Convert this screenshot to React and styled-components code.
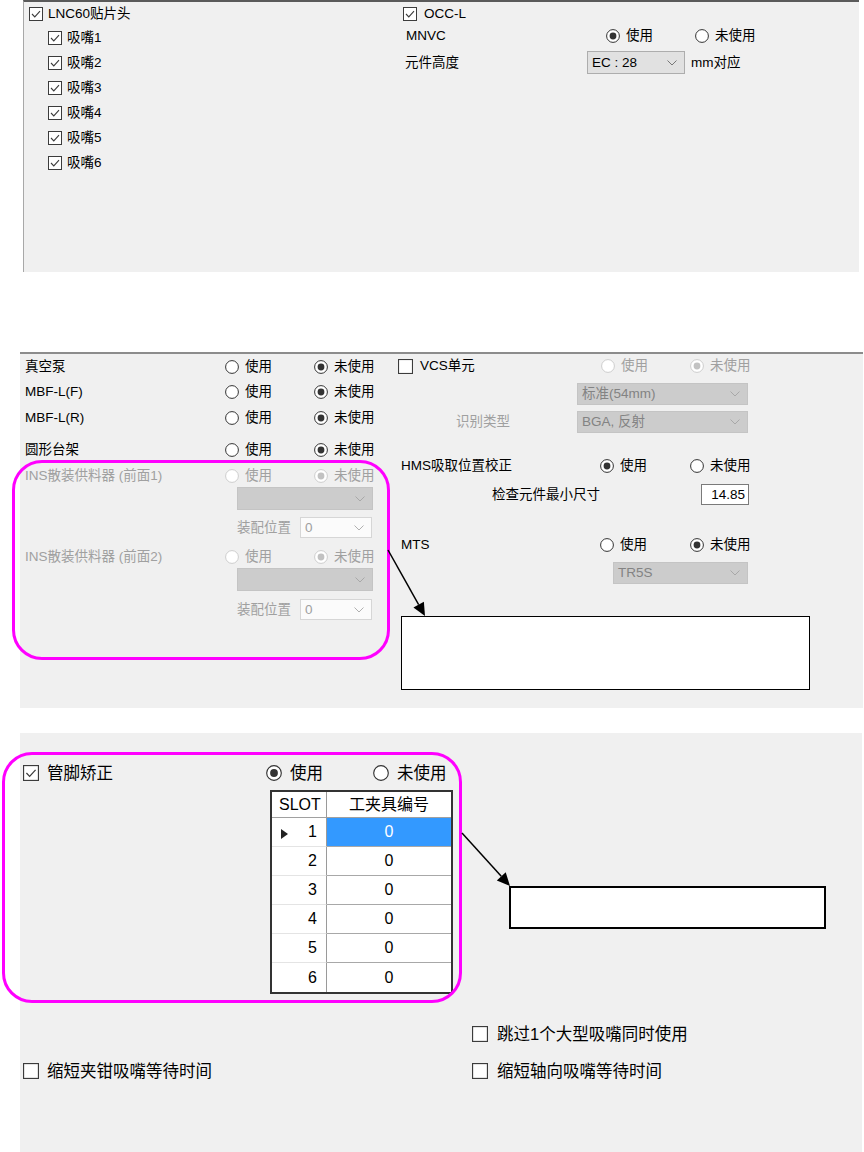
import React from 'react'
import styled, { createGlobalStyle } from 'styled-components'

const GlobalStyle = createGlobalStyle`
  body {
    margin: 0;
    background: #fff;
    font-family: "Liberation Sans", "Noto Sans CJK SC", sans-serif;
    color: #000;
  }
  * { box-sizing: border-box; }
`

const Page = styled.div`
  width: 864px;
  height: 1152px;
  overflow: hidden;
  display: flex;
  flex-direction: column;
`

const Panel = styled.section`
  position: relative;
  flex: ${p => p.$grow ? '1' : 'none'};
  background: #f0f0f0;
  margin-left: ${p => p.$left}px;
  margin-top: ${p => p.$top || 0}px;
  width: ${p => p.$width}px;
  height: ${p => p.$height ? p.$height + 'px' : 'auto'};
  border-top: ${p => p.$borderTop || 'none'};
  border-left: ${p => p.$borderLeft || 'none'};
  font-size: ${p => p.$font}px;
`

const Columns = styled.div`
  display: grid;
  grid-template-columns: ${p => p.$cols};
  padding-left: ${p => p.$pad || 0}px;
`

const Column = styled.div`
  display: flex;
  flex-direction: column;
`

const Row = styled.div`
  display: flex;
  align-items: center;
  height: ${p => p.$h || 22}px;
  margin-top: ${p => p.$mt || 0}px;
  padding-left: ${p => p.$indent || 0}px;
  white-space: nowrap;
`

const Cell = styled.div`
  flex: none;
  width: ${p => p.$w ? p.$w + 'px' : 'auto'};
  padding-left: ${p => p.$pad || 0}px;
  display: flex;
  align-items: center;
  gap: ${p => p.$gap || 0}px;
`

const Text = styled.span`
  color: ${p => p.$muted ? '#a0a0a0' : '#000'};
  line-height: 1;
`

const Option = styled.span`
  display: inline-flex;
  align-items: center;
  gap: ${p => p.$gap || 6}px;
`

const Svg = styled.svg`
  flex: none;
  display: block;
`

const CheckBox = ({ checked, size = 14 }) => (
  <Svg width={size} height={size} viewBox="0 0 14 14">
    <rect x="0.5" y="0.5" width="13" height="13" fill="#fff" stroke="#3c3c3c" />
    {checked && <path d="M3 7 L5.8 9.9 L11 4.2" fill="none" stroke="#3c3c3c" strokeWidth="1.1" />}
  </Svg>
)

const Radio = ({ checked, disabled, size = 14 }) => (
  <Svg width={size} height={size} viewBox="0 0 14 14">
    <circle cx="7" cy="7" r="6.4" fill="#fff" stroke={disabled ? '#cdcdcd' : '#333'} strokeWidth="1" />
    {checked && <circle cx="7" cy="7" r="3.4" fill={disabled ? '#c2c2c2' : '#333'} />}
  </Svg>
)

const CheckOption = ({ checked, label, size, gap, muted }) => (
  <Option $gap={gap}>
    <CheckBox checked={checked} size={size} />
    <Text $muted={muted}>{label}</Text>
  </Option>
)

const RadioOption = ({ checked, disabled, label, size, gap }) => (
  <Option $gap={gap}>
    <Radio checked={checked} disabled={disabled} size={size} />
    <Text $muted={disabled}>{label}</Text>
  </Option>
)

const SELECT = {
  normal: { bg: '#e1e1e1', border: '#adadad', color: '#000', arrow: '#777' },
  disabled: { bg: '#cccccc', border: '#c4c4c4', color: '#838383', arrow: '#a8a8a8' },
  field: { bg: '#fbfbfb', border: '#d6d6d6', color: '#a0a0a0', arrow: '#b0b0b0' },
}

const SelectBox = styled.div`
  flex: none;
  width: ${p => p.$w}px;
  height: ${p => p.$h || 22}px;
  margin-left: ${p => p.$ml || 0}px;
  margin-top: ${p => p.$mt || 0}px;
  display: flex;
  align-items: center;
  justify-content: space-between;
  padding: 0 7px 0 4px;
  background: ${p => SELECT[p.$kind].bg};
  border: 1px solid ${p => SELECT[p.$kind].border};
  color: ${p => SELECT[p.$kind].color};
  line-height: 1;
  white-space: nowrap;
`

const Select = ({ kind = 'normal', value = '', ...rest }) => (
  <SelectBox $kind={kind} {...rest}>
    <span>{value}</span>
    <Svg width="10" height="6" viewBox="0 0 10 6">
      <polyline points="0.5,0.5 5,5 9.5,0.5" fill="none" stroke={SELECT[kind].arrow} strokeWidth="1" />
    </Svg>
  </SelectBox>
)

const NumberInput = styled.div`
  flex: none;
  width: 48px;
  height: 21px;
  background: #fff;
  border: 1px solid #7a7a7a;
  display: flex;
  align-items: center;
  justify-content: flex-end;
  padding-right: 3px;
  line-height: 1;
`

/* grid table */
const Table = styled.div`
  margin-top: ${p => p.$mt}px;
  margin-left: ${p => p.$ml}px;
  display: grid;
  grid-template-columns: 55px 124px;
  width: 183px;
  border: 2px solid #333;
  background: #fff;
  font-size: 16px;
`
const HeadCell = styled.div`
  height: 26px;
  display: flex;
  align-items: center;
  justify-content: ${p => p.$center ? 'center' : 'flex-start'};
  padding-left: ${p => p.$center ? 0 : 7}px;
  border-bottom: 1px solid #a0a0a0;
  border-right: ${p => p.$center ? 'none' : '1px solid #9a9a9a'};
  line-height: 1;
`
const RowHead = styled.div`
  height: 29px;
  display: flex;
  align-items: center;
  justify-content: ${p => p.$current ? 'space-between' : 'flex-end'};
  padding: 0 9px 0 9px;
  border-bottom: ${p => p.$last ? 'none' : '1px solid #e4e4e4'};
  border-right: 1px solid #9a9a9a;
  line-height: 1;
`
const Pointer = styled.span`
  width: 0;
  height: 0;
  border-left: 7px solid #222;
  border-top: 5px solid transparent;
  border-bottom: 5px solid transparent;
  margin-top: 3px;
`
const DataCell = styled.div`
  height: 29px;
  display: flex;
  align-items: center;
  justify-content: center;
  background: ${p => p.$selected ? '#3399ff' : '#fff'};
  color: ${p => p.$selected ? '#fff' : '#000'};
  border-bottom: ${p => p.$last ? 'none' : '1px solid #a8a8a8'};
  line-height: 1;
`

/* annotations drawn over the form */
const Highlight = styled.div`
  position: absolute;
  left: ${p => p.$x}px;
  top: ${p => p.$y}px;
  width: ${p => p.$w}px;
  height: ${p => p.$h}px;
  border: 3px solid #ff00ff;
  border-radius: 30px;
  pointer-events: none;
`
const Callout = styled.div`
  position: absolute;
  left: ${p => p.$x}px;
  top: ${p => p.$y}px;
  width: ${p => p.$w}px;
  height: ${p => p.$h}px;
  background: #fff;
  border: ${p => p.$bw}px solid #000;
`
const ArrowLayer = styled.svg`
  position: absolute;
  left: 0;
  top: 0;
  overflow: visible;
  pointer-events: none;
`

const Arrow = ({ x1, y1, x2, y2 }) => {
  const dx = x2 - x1
  const dy = y2 - y1
  const len = Math.hypot(dx, dy)
  const ux = dx / len
  const uy = dy / len
  const bx = x2 - ux * 13
  const by = y2 - uy * 13
  const px = -uy * 6
  const py = ux * 6
  return (
    <ArrowLayer width="1" height="1">
      <line x1={x1} y1={y1} x2={bx} y2={by} stroke="#000" strokeWidth="1.5" />
      <polygon points={`${x2},${y2} ${bx + px},${by + py} ${bx - px},${by - py}`} fill="#000" />
    </ArrowLayer>
  )
}

const nozzles = [1, 2, 3, 4, 5, 6]

const HeadPanel = () => (
  <Panel $left={23} $width={836} $height={272} $font={13.5}
    $borderTop="2px solid #5a5a5a" $borderLeft="1px solid #a8a8a8">
    <Columns $cols="374px 1fr" $pad={5}>
      <Column>
        <Row $mt={1}>
          <CheckOption checked label="LNC60贴片头" gap={5} />
        </Row>
        {nozzles.map(n => (
          <Row key={n} $h={25} $indent={19}>
            <CheckOption checked label={`吸嘴${n}`} gap={5} />
          </Row>
        ))}
      </Column>
      <Column>
        <Row $mt={1}>
          <CheckOption checked label="OCC-L" gap={7} />
        </Row>
        <Row $indent={3}>
          <Cell $w={200}><Text>MNVC</Text></Cell>
          <Cell $w={89}><RadioOption checked label="使用" /></Cell>
          <Cell><RadioOption label="未使用" /></Cell>
        </Row>
        <Row $h={23} $mt={4} $indent={2}>
          <Cell $w={182}><Text>元件高度</Text></Cell>
          <Select value="EC : 28" $w={98} $h={23} />
          <Cell $pad={6}><Text>mm对应</Text></Cell>
        </Row>
      </Column>
    </Columns>
  </Panel>
)

const UseRow = ({ label, used, disabled, mt }) => (
  <Row $mt={mt}>
    <Cell $w={200}><Text $muted={disabled}>{label}</Text></Cell>
    <Cell $w={89}><RadioOption checked={used} disabled={disabled} label="使用" /></Cell>
    <Cell><RadioOption checked={!used} disabled={disabled} label="未使用" /></Cell>
  </Row>
)

const UnitPanel = () => (
  <Panel $left={20} $top={80} $width={843} $height={356} $font={13.5}
    $borderTop="2px solid #8c8c8c">
    <Columns $cols="373px 1fr" $pad={5}>
      <Column>
        <UseRow label="真空泵" mt={2} />
        <UseRow label="MBF-L(F)" mt={3} />
        <UseRow label="MBF-L(R)" mt={4} />
        <UseRow label="圆形台架" mt={10} />
        <UseRow label="INS散装供料器 (前面1)" disabled mt={4} />
        <Select kind="disabled" $w={136} $h={23} $ml={212} />
        <Row $h={21} $mt={7} $indent={212}>
          <Cell $w={63}><Text $muted>装配位置</Text></Cell>
          <Select kind="field" value="0" $w={72} $h={21} />
        </Row>
        <UseRow label="INS散装供料器 (前面2)" disabled mt={8} />
        <Select kind="disabled" $w={136} $h={23} $ml={212} />
        <Row $h={21} $mt={8} $indent={212}>
          <Cell $w={63}><Text $muted>装配位置</Text></Cell>
          <Select kind="field" value="0" $w={72} $h={21} />
        </Row>
      </Column>
      <Column>
        <Row $mt={1}>
          <Cell $w={203}><CheckOption label="VCS单元" size={15} gap={7} /></Cell>
          <Cell $w={89}><RadioOption disabled label="使用" /></Cell>
          <Cell><RadioOption checked disabled label="未使用" /></Cell>
        </Row>
        <Select kind="disabled" value="标准(54mm)" $w={171} $ml={179} $mt={6} />
        <Row $mt={6}>
          <Cell $w={179} $pad={58}><Text $muted>识别类型</Text></Cell>
          <Select kind="disabled" value="BGA, 反射" $w={171} />
        </Row>
        <Row $mt={22} $indent={3}>
          <Cell $w={199}><Text>HMS吸取位置校正</Text></Cell>
          <Cell $w={90}><RadioOption checked label="使用" /></Cell>
          <Cell><RadioOption label="未使用" /></Cell>
        </Row>
        <Row $h={21} $mt={7}>
          <Cell $w={303} $pad={94}><Text>检查元件最小尺寸</Text></Cell>
          <NumberInput>14.85</NumberInput>
        </Row>
        <Row $mt={29} $indent={3}>
          <Cell $w={199}><Text>MTS</Text></Cell>
          <Cell $w={90}><RadioOption label="使用" /></Cell>
          <Cell><RadioOption checked label="未使用" /></Cell>
        </Row>
        <Select kind="disabled" value="TR5S" $w={135} $ml={215} $mt={6} />
      </Column>
    </Columns>
    <Highlight $x={-8} $y={106} $w={378} $h={200} />
    <Arrow x1={368} y1={196} x2={405} y2={262} />
    <Callout $x={381} $y={262} $w={409} $h={74} $bw={1} />
  </Panel>
)

const LeadPanel = () => (
  <Panel $left={20} $top={25} $width={842} $grow $font={16.5}>
    <Row $mt={29} $indent={3}>
      <Cell $w={243}><CheckOption checked label="管脚矫正" size={16} gap={8} /></Cell>
      <Cell $w={107}><RadioOption checked label="使用" size={16} gap={8} /></Cell>
      <Cell><RadioOption label="未使用" size={16} gap={8} /></Cell>
    </Row>
    <Table $mt={6} $ml={250}>
      <HeadCell>SLOT</HeadCell>
      <HeadCell $center>工夹具编号</HeadCell>
      {nozzles.map((n, i) => (
        <React.Fragment key={n}>
          <RowHead $current={i === 0} $last={i === 5}>
            {i === 0 && <Pointer />}
            <span>{n}</span>
          </RowHead>
          <DataCell $selected={i === 0} $last={i === 5}>0</DataCell>
        </React.Fragment>
      ))}
    </Table>
    <Row $mt={29} $indent={452}>
      <CheckOption label="跳过1个大型吸嘴同时使用" size={16} gap={9} />
    </Row>
    <Row $mt={15} $indent={3}>
      <Cell $w={449}><CheckOption label="缩短夹钳吸嘴等待时间" size={16} gap={8} /></Cell>
      <Cell><CheckOption label="缩短轴向吸嘴等待时间" size={16} gap={9} /></Cell>
    </Row>
    <Highlight $x={-18} $y={19} $w={460} $h={251} />
    <Arrow x1={442} y1={100} x2={490} y2={153} />
    <Callout $x={489} $y={153} $w={317} $h={43} $bw={2} />
  </Panel>
)

const App = () => (
  <>
    <GlobalStyle />
    <Page>
      <HeadPanel />
      <UnitPanel />
      <LeadPanel />
    </Page>
  </>
)

export default App
